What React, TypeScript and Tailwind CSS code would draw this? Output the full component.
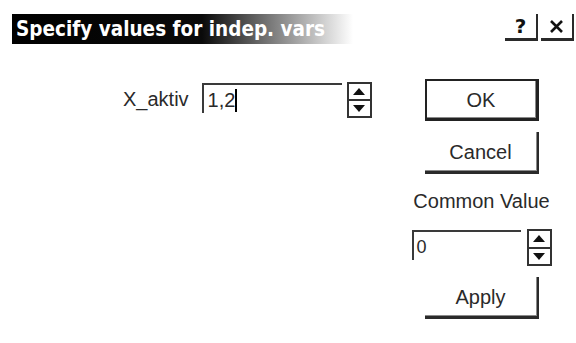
import React from 'react'

const textFont = "font-['Liberation_Sans',Arial,sans-serif]"

function Spinner({ tall = 'h-[37px]' }: { tall?: string }) {
  return (
    <div className={`flex w-[25px] ${tall} flex-col border-2 border-[#333]`}>
      <div className="flex flex-1 items-center justify-center">
        <svg width="12" height="7" viewBox="0 0 12 7">
          <polygon points="6,0 12,7 0,7" fill="#111" />
        </svg>
      </div>
      <div className="flex flex-1 items-center justify-center border-t-2 border-[#333]">
        <svg width="12" height="7" viewBox="0 0 12 7">
          <polygon points="0,0 12,0 6,7" fill="#111" />
        </svg>
      </div>
    </div>
  )
}

function Button({ label, isDefault = false, top }: { label: string; isDefault?: boolean; top: string }) {
  const frame = isDefault
    ? 'border-2 border-b-[3px] border-r-[3px] border-[#222]'
    : 'border-b-[3px] border-r-[2px] border-[#2a2a2a]'
  return (
    <div
      className={`${top} flex h-[42px] w-[114px] items-center justify-center ${frame} shadow-[inset_-1px_-1px_0_0_#8a8a8a] text-[20px] leading-[24px] text-[#2a2a2a]`}
    >
      {label}
    </div>
  )
}

export default function App() {
  return (
    <div className={`relative h-[343px] w-[576px] overflow-hidden bg-white ${textFont}`}>
      {/* title bar */}
      <div className="flex items-start pl-[12px] pt-[14px]">
        <div className="h-[30px] w-[341px] bg-[linear-gradient(to_right,#000_0px,#0a0a0a_190px,#fff_341px)] pl-[4px] font-['DejaVu_Sans_Condensed','DejaVu_Sans',sans-serif] text-[20.5px] font-bold leading-[30px] text-white whitespace-nowrap">
          Specify values for indep. vars
        </div>
        <div className="ml-auto mr-[2px] flex gap-[3px]">
          <div className="flex h-[27px] w-[33px] items-center justify-center border-b-[3px] border-r-[2px] border-[#2a2a2a] font-['DejaVu_Sans',sans-serif] text-[20px] font-bold leading-[24px] text-[#111]">
            ?
          </div>
          <div className="flex h-[27px] w-[33px] items-center justify-center border-b-[3px] border-r-[2px] border-[#2a2a2a]">
            <svg width="15" height="15" viewBox="0 0 15 15">
              <path d="M2 2 L13 13 M13 2 L2 13" stroke="#111" strokeWidth="2.6" />
            </svg>
          </div>
        </div>
      </div>

      {/* body */}
      <div className="flex items-start">
        <div className="flex w-[411px] items-start pl-[123px] pt-[39px]">
          <span className="pt-[4px] text-[20px] leading-[24px] text-[#2a2a2a]">X_aktiv</span>
          <div className="ml-[13px] flex h-[30px] w-[140px] items-start border-l-2 border-t-2 border-[#3a3a3a] pl-[4px] pt-[3px] text-[20px] leading-[24px] text-[#2a2a2a]">
            <span>1,2</span>
            <span className="mt-[1px] h-[23px] w-[2px] bg-black" />
          </div>
          <div className="ml-[5px] -mt-[1px]">
            <Spinner tall="h-[36px]" />
          </div>
        </div>

        <div className="flex w-[141px] flex-col items-center">
          <Button label="OK" isDefault top="mt-[35px]" />
          <Button label="Cancel" top="mt-[11px]" />
          <div className="mt-[15px] text-[20px] leading-[24px] text-[#2a2a2a]">Common Value</div>
          <div className="mt-[16px] flex items-start">
            <div className="mt-[1px] h-[30px] w-[109px] border-l-2 border-t-2 border-[#3a3a3a] pl-[3px] pt-[3px] text-[18px] leading-[24px] text-[#2a2a2a]">
              0
            </div>
            <div className="ml-[6px]">
              <Spinner />
            </div>
          </div>
          <Button label="Apply" top="mt-[11px]" />
        </div>
      </div>
    </div>
  )
}
